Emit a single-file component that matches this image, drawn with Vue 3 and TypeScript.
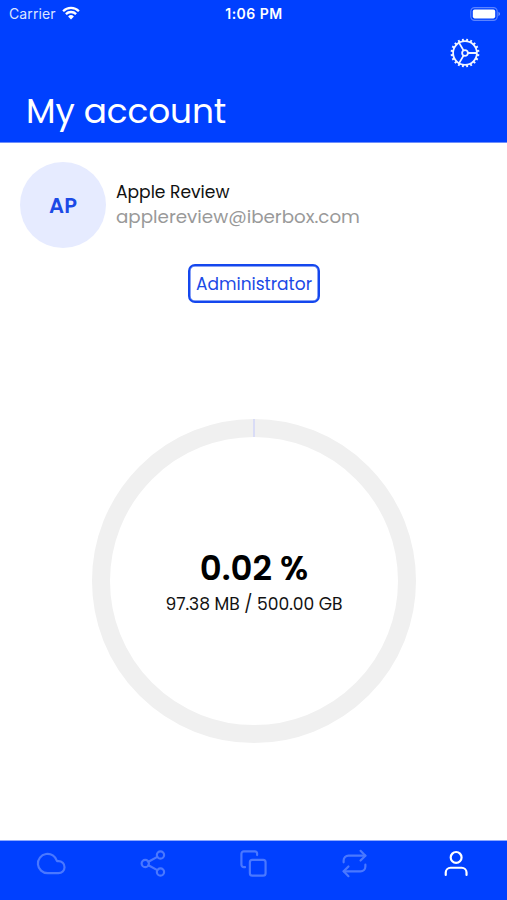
<script setup lang="ts">
interface Tab {
  name: string
  active?: boolean
  paths: string[]
}

const user = {
  initials: 'AP',
  name: 'Apple Review',
  email: 'applereview@iberbox.com',
  role: 'Administrator',
}

const storage = { percent: '0.02 %', detail: '97.38 MB / 500.00 GB' }

const gearTeeth = Array.from({ length: 20 }, (_, i) => i * 18 + 9)

const tabs: Tab[] = [
  { name: 'Cloud', paths: ['M18.6 10h-1.26A8 8 0 1 0 9.6 20h9a5 5 0 0 0 0-10z'] },
  {
    name: 'Shared',
    paths: [
      'M21.6 5a3 3 0 1 1-6 0 3 3 0 0 1 6 0z',
      'M9 12a3 3 0 1 1-6 0 3 3 0 0 1 6 0z',
      'M21.6 19a3 3 0 1 1-6 0 3 3 0 0 1 6 0z',
      'M8.59 13.51l7.43 3.98M16.01 6.51l-7.42 3.98',
    ],
  },
  {
    name: 'Copies',
    paths: [
      'M11 9h9a2 2 0 0 1 2 2v9a2 2 0 0 1-2 2h-9a2 2 0 0 1-2-2v-9a2 2 0 0 1 2-2z',
      'M5 15H4a2 2 0 0 1-2-2V4a2 2 0 0 1 2-2h9a2 2 0 0 1 2 2v1',
    ],
  },
  {
    name: 'Sync',
    paths: ['M17 1.5l4 4-4 4', 'M3 11V9.5a4 4 0 0 1 4-4h14', 'M7 22.5l-4-4 4-4', 'M21 13v1.5a4 4 0 0 1-4 4H3'],
  },
  {
    name: 'Account',
    active: true,
    paths: ['M20.3 21.5v-2a4 4 0 0 0-4-4H7.1a4 4 0 0 0-4 4v2', 'M16.2 7a4.5 4.5 0 1 1-9 0 4.5 4.5 0 0 1 9 0z'],
  },
]
</script>

<template>
  <div class="screen">
    <header class="header">
      <div class="status">
        <div class="carrier">
          <span>Carrier</span>
          <svg class="wifi" viewBox="0 0 18 14">
            <path d="M1.1 5.2a11.2 11.2 0 0 1 15.8 0M3.9 8.1a7.2 7.2 0 0 1 10.2 0" />
            <path class="dot" d="M9 13.4l-2.9-2.9a4.1 4.1 0 0 1 5.8 0z" />
          </svg>
        </div>
        <span class="time">1:06 PM</span>
        <div class="power">
          <svg class="battery" viewBox="0 0 31 14">
            <rect class="shell" x="0.8" y="0.6" width="26.4" height="12.8" rx="3.8" />
            <rect class="charge" x="2.8" y="2.6" width="22.4" height="8.8" rx="1.8" />
            <path class="tip" d="M28.5 4.8q3 2.2 0 4.4z" />
          </svg>
        </div>
      </div>
      <div class="actions">
        <svg class="gear" viewBox="-15 -15 30 30">
          <circle r="11.9" />
          <circle r="2.9" />
          <path d="M3 0H12M-1.5-2.6L-6-10.4M-1.5 2.6L-6 10.4" />
          <path v-for="a in gearTeeth" :key="a" d="M12 0H14.4" class="tooth" :transform="`rotate(${a})`" />
        </svg>
      </div>
      <h1 class="title">My account</h1>
    </header>

    <main class="content">
      <section class="profile">
        <div class="avatar">{{ user.initials }}</div>
        <div class="identity">
          <div class="name">{{ user.name }}</div>
          <div class="email">{{ user.email }}</div>
        </div>
      </section>
      <div class="role">{{ user.role }}</div>
      <section class="storage">
        <div class="ring">
          <div class="percent">{{ storage.percent }}</div>
          <div class="detail">{{ storage.detail }}</div>
          <div class="marker"></div>
        </div>
      </section>
    </main>

    <nav class="tabs">
      <div v-for="tab in tabs" :key="tab.name" class="tab" :class="{ active: tab.active }">
        <svg viewBox="0 0 24 24">
          <path v-for="d in tab.paths" :key="d" :d="d" />
        </svg>
      </div>
    </nav>
  </div>
</template>

<style>
body {
  margin: 0;
  background: #fff;
}
</style>

<style scoped>
.screen {
  display: flex;
  flex-direction: column;
  width: 507px;
  height: 900px;
  overflow: hidden;
  background: #fff;
  font-family: Poppins, Inter, "Liberation Sans", sans-serif;
  white-space: nowrap;
}
.header {
  box-sizing: border-box;
  height: 143px;
  flex: none;
  background: #0040ff;
  color: #fff;
  border-bottom: 1px solid #6f8ffb;
}
.status {
  display: grid;
  grid-template-columns: 1fr auto 1fr;
  align-items: center;
  height: 27px;
  padding: 0 7px 0 9px;
  font-family: Inter, "Liberation Sans", sans-serif;
  font-size: 14px;
}
.carrier {
  display: flex;
  align-items: center;
  gap: 6px;
  color: #dce5ff;
  letter-spacing: 0.12px;
}
.wifi {
  width: 18px;
  height: 14px;
  margin-top: -1px;
  fill: none;
  stroke: #fff;
  stroke-width: 2.3;
}
.wifi .dot {
  fill: #fff;
  stroke: none;
}
.time {
  margin-left: -1px;
  font-weight: 600;
  letter-spacing: 0.5px;
}
.power {
  display: flex;
  justify-content: flex-end;
  margin-right: -1px;
}
.battery {
  width: 31px;
  height: 14px;
}
.shell {
  fill: none;
  stroke: #5c84ff;
  stroke-width: 1.1;
}
.charge {
  fill: #fff;
}
.tip {
  fill: #7c9bff;
}
.actions {
  display: flex;
  justify-content: flex-end;
  padding: 10.5px 27px 0 0;
}
.gear {
  width: 30px;
  height: 30px;
  fill: none;
  stroke: #f2f5ff;
  stroke-width: 1.8;
}
.tooth {
  stroke-width: 1.9;
}
.title {
  margin: 21.5px 0 0 26px;
  font-size: 34.3px;
  line-height: 44px;
  font-weight: 400;
  letter-spacing: -0.1px;
}
.content {
  flex: 1;
  display: flex;
  flex-direction: column;
  align-items: center;
}
.profile {
  align-self: stretch;
  display: flex;
  align-items: center;
  gap: 10px;
  padding: 19px 20px 0;
}
.avatar {
  display: flex;
  align-items: center;
  justify-content: center;
  width: 86px;
  height: 86px;
  border-radius: 50%;
  background: #e6ebff;
  color: #1c4ae6;
  font-size: 21px;
  font-weight: 600;
}
.identity {
  padding-bottom: 2px;
}
.name {
  font-size: 17.1px;
  line-height: 25px;
  color: #111;
}
.email {
  font-size: 18.3px;
  line-height: 24px;
  color: #999;
}
.role {
  box-sizing: border-box;
  display: flex;
  align-items: center;
  justify-content: center;
  width: 132px;
  height: 39px;
  margin: 16px 0 0 1px;
  border: 2px solid #1447ee;
  box-shadow: inset 0 0 0 0.5px #1447ee;
  border-radius: 7px;
  color: #1c4ae6;
  font-size: 17px;
}
.storage {
  margin-top: 116px;
}
.ring {
  position: relative;
  box-sizing: border-box;
  display: flex;
  flex-direction: column;
  align-items: center;
  width: 324px;
  height: 324px;
  padding-top: 109px;
  border: 18px solid #f0f0f0;
  border-radius: 50%;
  margin-left: 1px;
}
.marker {
  position: absolute;
  top: -18px;
  left: 143px;
  width: 2px;
  height: 18px;
  background: #d9dcf6;
}
.percent {
  color: #000;
  font-size: 34px;
  line-height: 44px;
  font-weight: 600;
}
.detail {
  color: #111;
  font-size: 17.1px;
  line-height: 28px;
}
.tabs {
  box-sizing: border-box;
  flex: none;
  display: grid;
  grid-template-columns: repeat(5, 1fr);
  height: 60px;
  padding-top: 8px;
  border-top: 1px solid #8ea9ff;
  background: #0040ff;
}
.tab {
  display: flex;
  justify-content: center;
  color: #4a78ff;
}
.tab svg {
  width: 29px;
  height: 29px;
  fill: none;
  stroke: currentColor;
  stroke-width: 1.8;
  stroke-linecap: round;
  stroke-linejoin: round;
  overflow: visible;
}
.tab.active {
  color: #fff;
}
</style>
